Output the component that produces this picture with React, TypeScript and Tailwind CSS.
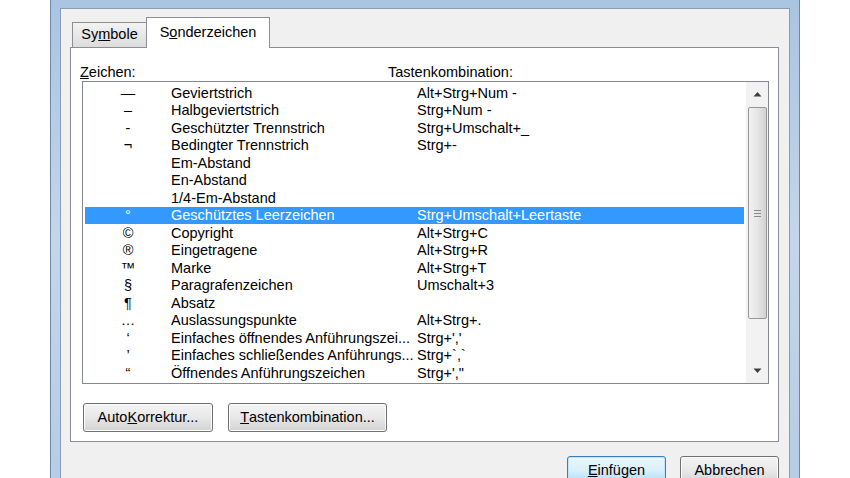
import React from 'react'

type Row = { sym: string; name: string; keys: string }

const rows: Row[] = [
  { sym: '—', name: 'Geviertstrich', keys: 'Alt+Strg+Num -' },
  { sym: '–', name: 'Halbgeviertstrich', keys: 'Strg+Num -' },
  { sym: '-', name: 'Geschützter Trennstrich', keys: 'Strg+Umschalt+_' },
  { sym: '¬', name: 'Bedingter Trennstrich', keys: 'Strg+-' },
  { sym: '', name: 'Em-Abstand', keys: '' },
  { sym: '', name: 'En-Abstand', keys: '' },
  { sym: '', name: '1/4-Em-Abstand', keys: '' },
  { sym: '°', name: 'Geschütztes Leerzeichen', keys: 'Strg+Umschalt+Leertaste' },
  { sym: '©', name: 'Copyright', keys: 'Alt+Strg+C' },
  { sym: '®', name: 'Eingetragene', keys: 'Alt+Strg+R' },
  { sym: '™', name: 'Marke', keys: 'Alt+Strg+T' },
  { sym: '§', name: 'Paragrafenzeichen', keys: 'Umschalt+3' },
  { sym: '¶', name: 'Absatz', keys: '' },
  { sym: '…', name: 'Auslassungspunkte', keys: 'Alt+Strg+.' },
  { sym: '‘', name: 'Einfaches öffnendes Anführungszei...', keys: "Strg+','" },
  { sym: '’', name: 'Einfaches schließendes Anführungs...', keys: 'Strg+`,`' },
  { sym: '“', name: 'Öffnendes Anführungszeichen', keys: 'Strg+\',"' },
]

const SELECTED = 7

function Button({ children, primary, className = '' }: { children: React.ReactNode; primary?: boolean; className?: string }) {
  return (
    <div
      className={`flex h-[29px] items-center justify-center rounded-[3px] border bg-gradient-to-b text-black ${
        primary
          ? 'border-[#3c7fb1] from-[#eaf6fd] via-[#d9f0fc] to-[#a7d9f5] shadow-[inset_0_0_0_1px_#bfe4f7]'
          : 'border-[#707070] from-[#f4f4f4] via-[#e8e8e8] to-[#d2d2d2] shadow-[inset_0_0_0_1px_#fcfcfc]'
      } ${className}`}
    >
      {children}
    </div>
  )
}

function Scrollbar() {
  return (
    <div className="flex w-[22px] shrink-0 flex-col items-center bg-[#f2f2f2] pt-[9px] pb-[9px]">
      <svg width="9" height="6" viewBox="0 0 9 6" className="shrink-0">
        <path d="M0.5 5.5 L4.5 1 L8.5 5.5 Z" fill="#3f3f3f" />
      </svg>
      <div className="mt-[10px] flex h-[212px] w-[19px] items-center justify-center rounded-[2px] border border-[#979797] bg-gradient-to-r from-[#f2f2f2] via-[#e6e6e6] to-[#d2d2d2]">
        <div className="flex flex-col gap-[2px]">
          <div className="h-px w-[7px] bg-[#8a8a8a]" />
          <div className="h-px w-[7px] bg-[#8a8a8a]" />
          <div className="h-px w-[7px] bg-[#8a8a8a]" />
        </div>
      </div>
      <div className="flex-1" />
      <svg width="9" height="6" viewBox="0 0 9 6" className="shrink-0">
        <path d="M0.5 0.5 L4.5 5 L8.5 0.5 Z" fill="#3f3f3f" />
      </svg>
    </div>
  )
}

export default function App() {
  return (
    <div className="flex h-[478px] w-[850px] justify-center overflow-hidden bg-white font-['Liberation_Sans',Arial,sans-serif] text-[14.5px] text-black">
      <div className="h-full w-[750px] border-x border-[#6f87a6] bg-gradient-to-b from-[#a9c4e2] via-[#c3d6ec] to-[#b6cde7] px-[9px] pt-[8px]">
        <div className="flex h-full flex-col border border-b-0 border-[#8a9bb2] bg-[#f0f0f0] pt-[8px] pr-[10px] pl-[9px]">
          {/* tabs */}
          <div className="relative z-10 flex h-[31px] items-end pl-[2px]">
            <div className="-mb-px flex h-[26px] w-[74px] items-center justify-center border border-r-0 border-[#8c8e94] bg-gradient-to-b from-[#f3f3f3] to-[#dcdcdc]">
              Sy<span className="underline">m</span>bole
            </div>
            <div className="-mb-px flex h-[31px] w-[124px] items-center justify-center border border-b-0 border-[#8c8e94] bg-white pb-[1px]">
              S<span className="underline">o</span>nderzeichen
            </div>
          </div>

          {/* panel */}
          <div className="flex flex-col border border-[#898c95] bg-white pt-[16px] pr-[9px] pb-[9px] pl-[11px]">
            <div className="flex h-[17px] items-center">
              <div className="w-[306px]">
                <span className="-ml-[2px]">
                  <span className="underline">Z</span>eichen:
                </span>
              </div>
              <div>Tastenkombination:</div>
            </div>

            <div className="flex h-[303px] border border-[#828790] bg-white">
              <div className="flex-1 overflow-hidden px-[2px] pt-[2px]">
                {rows.map((r, i) => (
                  <div
                    key={i}
                    className={`flex h-[17.5px] items-center whitespace-nowrap pt-[2px] ${
                      i === SELECTED ? 'bg-[#3399ff] text-white' : ''
                    }`}
                  >
                    <div className="w-[86px] text-center">{r.sym}</div>
                    <div className="w-[246px] overflow-hidden">{r.name}</div>
                    <div>{r.keys}</div>
                  </div>
                ))}
              </div>
              <Scrollbar />
            </div>

            <div className="mt-[19px] ml-px flex gap-[15px]">
              <Button className="w-[130px]">
                Auto<span className="underline">K</span>orrektur...
              </Button>
              <Button className="w-[159px]">
                <span className="underline">T</span>astenkombination...
              </Button>
            </div>
          </div>

          {/* dialog buttons */}
          <div className="mt-[14px] flex justify-end gap-[14px]">
            <Button primary className="w-[99px]">
              <span className="underline">E</span>infügen
            </Button>
            <Button className="w-[99px]">Abbrechen</Button>
          </div>
        </div>
      </div>
    </div>
  )
}
